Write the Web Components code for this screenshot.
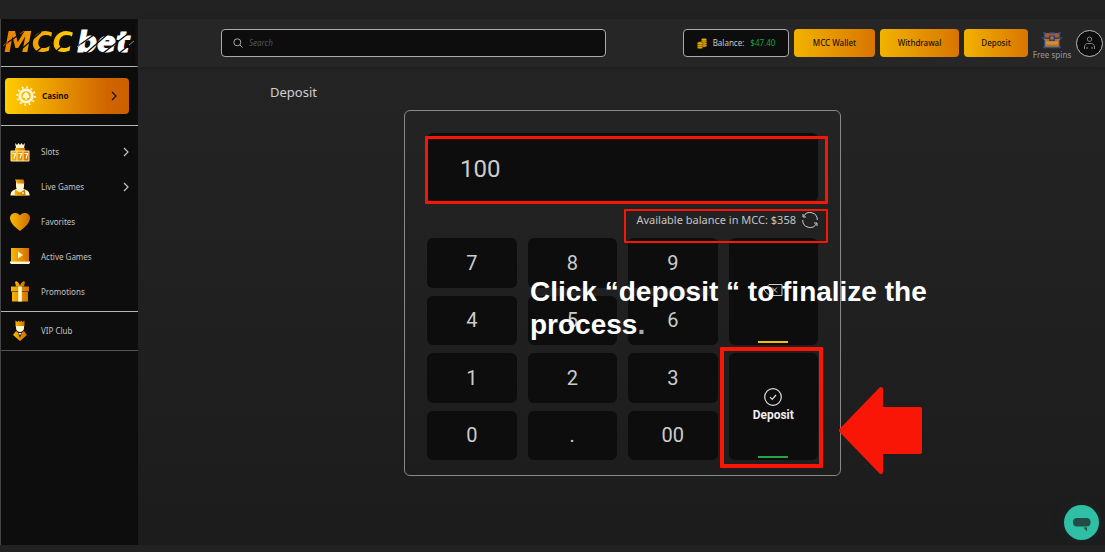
<!DOCTYPE html>
<html lang="en">
<head>
<meta charset="utf-8">
<meta name="viewport" content="width=device-width, initial-scale=1">
<title>MCC bet – Deposit</title>
<style>
  html, body { margin: 0; }
  body { font-family: "Noto Sans", Roboto, sans-serif; background: #222; color: #ccc; }
</style>
</head>
<body>
<casino-app></casino-app>

<script>
const define = (name, html, setup) => {
  const template = document.createElement('template');
  template.innerHTML = html;
  customElements.define(name, class extends HTMLElement {
    constructor() {
      super();
      const root = this.attachShadow({ mode: 'open' });
      root.append(template.content.cloneNode(true));
    }
    connectedCallback() { if (setup) setup(this, this.shadowRoot); }
  });
};

const gold = id => `<defs><linearGradient id="${id}"><stop offset="0" stop-color="#f8b900"/><stop offset="1" stop-color="#d06c00"/></linearGradient></defs>`;

const icons = {
  casino: `<svg viewBox="0 0 20 20"><circle cx="10" cy="10" r="6.2" fill="none" stroke="#fff6d0" stroke-width="2.8"/><circle cx="10" cy="10" r="8.8" fill="none" stroke="#fff6d0" stroke-width="2" stroke-dasharray="1.8 2.8"/><path d="M10 5.8c1 1.6 3.4 2.6 3.4 4.6 0 1.6-1.8 2.2-2.8 1.1l.7 2.3H8.7l.7-2.3c-1 1.1-2.8.5-2.8-1.1 0-2 2.4-3 3.4-4.6z" fill="#fff6d0"/></svg>`,
  slots: `<svg viewBox="0 0 20 20">${gold('g')}<path d="M5 1l2 2 1.5-2L10 3l1.500-2L13 3l2-2-1 5H6z" fill="#fff6d0"/><path d="M5 6h10v3H5z" fill="url(#g)"/><rect x=".5" y="8.500" width="19" height="11" rx="1" fill="#ffe9a8"/><path d="M1.500 9.500h5v9h-5zM7.500 9.500h5v9h-5zM13.500 9.500h5v9h-5z" fill="url(#g)"/><path d="M2.500 11.500h3L4 16.500M8.500 11.500h3L10 16.500M14.500 11.500h3L16 16.500" fill="none" stroke="#fff6d0" stroke-width="1.200"/></svg>`,
  live: `<svg viewBox="0 0 20 20">${gold('g')}<path d="M.5 18.500c0-4 2-5.500 6-6.500h7c4 1 6 2.500 6 6.500z" fill="#fff6d0"/><path d="M5 12.500l5 3 5-3 .5 6h-11z" fill="url(#g)"/><path d="M6 4h8v5c0 3-2 6-4 6s-4-3-4-6z" fill="#fff6d0"/><path d="M5 2.500h8.500l1 4H7z" fill="url(#g)"/><circle cx="13" cy="16" r="1" fill="#fff6d0"/></svg>`,
  heart: `<svg viewBox="0 0 20 20">${gold('g')}<path d="M10 19C5 15 0 11 0 6c0-5 7-7 10-2.500C13 -1 20 1 20 6c0 5-5 9-10 13z" fill="url(#g)"/></svg>`,
  active: `<svg viewBox="0 0 20 20">${gold('g')}<path d="M1 1h18v14H1z" fill="url(#g)"/><path d="M8 4.500l5 3.500L8 11.500z" fill="#fff6d0"/><path d="M0 14.500h20v1.200L19 17H1L0 15.700z" fill="#fff6d0"/></svg>`,
  gift: `<svg viewBox="0 0 20 20">${gold('g')}<path d="M1 4.500h18v5H1zM2 10h16v9.500H2z" fill="url(#g)"/><path d="M5 0c2-2 4 1 5 4C11 1 13-2 15 0l-1 4.500H6z" fill="url(#g)"/><path d="M8.200 4.500h3.600v15H8.200z" fill="#fff6d0"/></svg>`,
  vip: `<svg viewBox="0 0 20 20">${gold('g')}<path d="M5.500-.5l2 1.500L8.800-.5 10 1 11.200-.5l1.300 1.500 2-1.500v6h-9z" fill="url(#g)"/><path d="M6 5h8v2c0 2.500-2 4-4 4s-4-1.500-4-4z" fill="#fff6d0"/><path d="M6 10l4 3 4-3 3 4-7 6-7-6z" fill="url(#g)"/><path d="M8 12h4l-2 5z" fill="#222"/><path d="M8.500 12h3l-.7 1.500H9.200z" fill="#fff6d0"/></svg>`,
};

define('nav-item', `
<style>
  :host { display: block; }
  a { display: flex; align-items: center; box-sizing: border-box; height: 35px; padding: 0 8px 0 9px;
      color: #c4c4c4; font-size: 8px; line-height: 12px; text-decoration: none; }
  .icon { width: 20px; height: 20px; margin-right: 11px; flex: none; }
  .icon svg { display: block; width: 100%; height: 100%; overflow: visible; }
  .label { flex: 1; }
  .chevron { display: none; width: 8px; height: 10px; }
  :host([expandable]) .chevron { display: block; }
  :host([primary]) a { height: 36px; margin: 0 9px 0 4px; padding: 0 11px; border-radius: 4px;
      background: linear-gradient(90deg, #fc0 0%, #d06400 82%, #cc6000 100%); color: #171000; font-weight: 700; }
  :host([primary]) .icon { margin-right: 6px; }
</style>
<a href="#"><span class="icon"></span><span class="label"><slot></slot></span>
<svg class="chevron" viewBox="0 0 8 10"><path d="M2 1l4 4-4 4" fill="none" stroke="currentColor" stroke-width="1.200"/></svg></a>
`, (host, root) => { root.querySelector('.icon').innerHTML = icons[host.getAttribute('icon')]; });

define('brand-logo', `
<style>
  :host { display: block; }
  a { position: relative; display: flex; align-items: center; gap: 4px; height: 47px; padding-left: 3px;
      font: italic 700 28px/32px "DejaVu Sans", sans-serif; text-decoration: none; color: #fff; }
  .mcc { background: linear-gradient(90deg, #e67c00, #ffd000); -webkit-background-clip: text; background-clip: text; color: transparent; }
  .bet { -webkit-text-stroke: 1px #fff; }
  svg { position: absolute; left: 0; top: 0; width: 137px; height: 47px; }
</style>
<a href="#"><span class="mcc">MCC</span><span class="bet">bet</span>
<svg viewBox="0 0 137 47" fill="none"><path d="M3 26l19-13M16 34l24-21M34 34l24-21M53 34l24-21M77 27l20-14M84 35l24-21M101 35l27-21M117 35l17-13" stroke="#0d0d0d" stroke-width="1.300"/><path d="M2 27l5-4M19 15l4-3" stroke="#c87400" stroke-width=".8"/><path d="M76 28l4-3M128 26l5-4" stroke="#aaa" stroke-width=".8"/></svg></a>
`);

define('side-bar', `
<style>
  :host { display: block; box-sizing: border-box; background: #0d0d0d; border-left: 1px solid #444; }
  header { border-bottom: 1px solid #b5b5b5; }
  .top { padding: 11px 0; border-bottom: 1px solid #b5b5b5; }
  .games { padding: 8px 0 2px; border-bottom: 1px solid #b5b5b5; }
  .vip { padding: 1px 0 2px; border-bottom: 1px solid #555; }
</style>
<header><brand-logo></brand-logo></header>
<nav>
  <div class="top"><nav-item primary expandable icon="casino">Casino</nav-item></div>
  <div class="games">
    <nav-item expandable icon="slots">Slots</nav-item>
    <nav-item expandable icon="live">Live Games</nav-item>
    <nav-item icon="heart">Favorites</nav-item>
    <nav-item icon="active">Active Games</nav-item>
    <nav-item icon="gift">Promotions</nav-item>
  </div>
  <div class="vip"><nav-item icon="vip">VIP Club</nav-item></div>
</nav>
`);

define('gold-button', `
<style>
  :host { display: block; }
  button { height: 28px; width: 100%; padding: 0; border: 0; border-radius: 4px; cursor: pointer;
    background: linear-gradient(90deg, #f2b200, #d87500); color: #1c1300; font: 500 8px/12px "Noto Sans", sans-serif; }
</style>
<button type="button"><slot></slot></button>
`);

define('top-bar', `
<style>
  :host { display: flex; align-items: center; box-sizing: border-box; height: 48px; padding: 0 2px 0 83px;
    background: #262626; box-shadow: 0 1px 4px #1b1b1b; position: relative; }
  .search { display: flex; align-items: center; gap: 6px; box-sizing: border-box; flex: 0 1 385px; height: 28px; padding: 0 11px;
    border: 1px solid #aaa; border-radius: 4px; background: #0d0d0d; }
  .search svg { width: 10px; height: 10px; flex: none; }
  input { flex: 1; min-width: 0; padding: 0; border: 0; outline: 0; background: none; color: #ccc; font: italic 8px/12px "Noto Sans", sans-serif; }
  input::placeholder { color: #555; opacity: 1; }
  .actions { display: flex; align-items: center; gap: 5px; margin-left: auto; }
  .balance { display: flex; align-items: center; justify-content: center; box-sizing: border-box; width: 106px; height: 28px;
    border: 1px solid #aaa; border-radius: 4px; background: #0d0d0d; font-size: 8px; line-height: 12px; gap: 6px; white-space: nowrap; }
  .balance svg { width: 10px; height: 11px; }
  .balance b { font-weight: 400; color: #17a348; }
  .wallet { width: 81px; } .withdraw { width: 79px; } .deposit { width: 64px; }
  .spins { display: flex; flex-direction: column; align-items: center; width: 38px; padding-top: 6px; color: #8c8c8c;
     font-size: 8px; line-height: 12px; font-weight: 500; text-decoration: none; white-space: nowrap; }
  .spins svg { width: 20px; height: 17px; }
  .profile { width: 27px; height: 27px; padding: 0; border: 1px solid #bbb; border-radius: 50%; background: #0d0d0d; display: grid; place-items: center; }
  .profile svg { width: 13px; height: 14px; }
</style>
<label class="search">
  <svg viewBox="0 0 10 10" fill="none" stroke="#aaa"><circle cx="4.300" cy="4.300" r="3.500"/><path d="M7 7l2.500 2.500"/></svg>
  <input type="search" placeholder="Search" aria-label="Search">
</label>
<div class="actions">
  <div class="balance">
    <svg viewBox="0 0 10 11" fill="#e8ac0a" stroke="#5a3c00" stroke-width=".5"><ellipse cx="7" cy="7.500" rx="2.800" ry="1.500"/><ellipse cx="7" cy="5.500" rx="2.800" ry="1.500"/><ellipse cx="7" cy="3.500" rx="2.800" ry="1.500"/><ellipse cx="7" cy="1.700" rx="2.800" ry="1.500"/><ellipse cx="3" cy="9.300" rx="2.800" ry="1.500"/><ellipse cx="3" cy="7.300" rx="2.800" ry="1.500"/><ellipse cx="3" cy="5.300" rx="2.800" ry="1.500"/></svg>
    <span>Balance:</span><b>$47.40</b>
  </div>
  <gold-button class="wallet">MCC Wallet</gold-button>
  <gold-button class="withdraw">Withdrawal</gold-button>
  <gold-button class="deposit">Deposit</gold-button>
  <a class="spins" href="#">
    <svg viewBox="0 0 20 17"><path d="M2 1h16v5H2z" fill="#a85a28"/><path d="M2 7h16v8H2z" fill="#b87420"/><path d="M4 9.500h12v3H4z" fill="#d08f38"/><path d="M1 1h3M7 1h6M16 1h3M0 6h20M1 15.500h18" stroke="#2c4f8c" stroke-width="1.500"/><path d="M2.500 1v4M17.500 1v4M2.500 8v7M17.500 8v7" stroke="#2c4f8c" stroke-width="1.200"/><path d="M7 3.500h6V9H7z" fill="#27427a"/><path d="M8.500 4.500h3v3h-3z" fill="#d0604c"/></svg>
    <span>Free spins</span>
  </a>
  <button class="profile" type="button" aria-label="Profile"><svg viewBox="0 0 13 14" fill="none" stroke="#888"><circle cx="6.500" cy="3.200" r="2.200"/><path d="M1.500 13v-2c0-2 1.500-3.500 3-3.500h4c1.500 0 3 1.500 3 3.500v2M4 11v2M9 11v2"/></svg></button>
</div>
`);

define('pad-key', `
<style>
  :host { display: block; }
  :host([tall]) { grid-column: 4; grid-row: span 2; }
  button { position: relative; display: flex; flex-direction: column; align-items: center; justify-content: center; gap: 2px;
    width: 100%; height: 100%; padding: 0; border: 0; border-radius: 6px; background: #0d0d0d; color: #ccc;
    font: 400 20px/24px Roboto, sans-serif; cursor: pointer; }
  :host([tall]) button { padding-bottom: 4px; font: 700 12px/14px Roboto, sans-serif; color: #eee; }
  :host([accent]) button::after { content: ""; position: absolute; left: 50%; bottom: 2px; width: 30px; height: 2px; margin-left: -15px; background: var(--accent); }
</style>
<button type="button"><slot></slot></button>
`);

define('tutorial-note', `
<style>
  :host { position: absolute; left: 125px; top: 164px; width: 410px; z-index: 2; pointer-events: none; }
  p { margin: 0; font: 700 28px/33px "Liberation Sans", Arial, sans-serif; color: #fff; }
  span { color: #aaa; }
</style>
<p>Click “deposit “ to finalize the process<span>.</span></p>
`);

define('deposit-panel', `
<style>
  :host { position: relative; display: block; box-sizing: border-box; width: 100%; max-width: 437px; margin: 0 auto;
    padding: 22px 22px 15px; border: 1px solid #888; border-radius: 6px; }
  .amount { display: block; box-sizing: border-box; width: 100%; height: 69px; padding: 2px 33px 0; border: 0; border-radius: 6px; outline: 0;
    background: #0d0d0d; color: #ccc; font: 400 24px/30px Roboto, sans-serif; }
  .available { display: flex; align-items: center; justify-content: flex-end; gap: 6px; height: 36px; font-size: 11px; line-height: 16px; color: #c4c4c4; }
  .refresh { width: 16px; height: 16px; padding: 0; border: 0; background: none; }
  .refresh svg { display: block; width: 16px; height: 16px; }
  .keys { display: grid; grid-template-columns: repeat(4, 1fr); grid-template-rows: repeat(4, 1fr); grid-auto-flow: row dense; gap: 8px 11px; height: 222px; }
  .back { width: 20px; height: 14px; } .check { width: 18px; height: 18px; }
  .mark { position: absolute; box-sizing: border-box; border: 3px solid #f91607; border-radius: 1px; pointer-events: none; }
  .mark.one { left: 20px; top: 25px; width: 403px; height: 68px; }
  .mark.two { left: 219px; top: 98px; width: 204px; height: 34px; border-width: 2px; }
  .mark.three { left: 315px; top: 236px; width: 103px; height: 121px; border-width: 4px; }
  .arrow { position: absolute; left: 434px; top: 275px; width: 83px; height: 89px; }
</style>
<input class="amount" type="text" inputmode="decimal" value="100" aria-label="Deposit amount">
<div class="available"><span>Available balance in MCC: $358</span>
  <button class="refresh" type="button" aria-label="Refresh balance"><svg viewBox="0 0 16 16" fill="none" stroke="#ccc"><path d="M1.500 4.500A7.300 7.300 0 0 1 15.300 8M14.500 11.500A7.300 7.300 0 0 1 .7 8"/><path d="M1 2v3h3M15 14v-3h-3"/></svg></button>
</div>
<div class="keys">
  <pad-key>7</pad-key><pad-key>8</pad-key><pad-key>9</pad-key>
  <pad-key tall accent style="--accent: #f0be0c"><svg class="back" viewBox="0 0 20 14" role="img" aria-label="Delete" fill="none" stroke="#ccc"><path d="M6 1.500h13v11H6L1 7zM9 4.500l5 5M14 4.500l-5 5"/></svg></pad-key>
  <pad-key>4</pad-key><pad-key>5</pad-key><pad-key>6</pad-key>
  <pad-key>1</pad-key><pad-key>2</pad-key><pad-key>3</pad-key>
  <pad-key tall accent style="--accent: #22a447"><svg class="check" viewBox="0 0 18 18" fill="none" stroke="#ddd"><circle cx="9" cy="9" r="8.300" stroke-width="1.200"/><path d="M6 9.200l2.200 2.200L12 7" stroke-width="1.200"/></svg><span>Deposit</span></pad-key>
  <pad-key>0</pad-key><pad-key>.</pad-key><pad-key>00</pad-key>
</div>
<div class="mark one"></div><div class="mark two"></div><div class="mark three"></div>
<svg class="arrow" viewBox="0 0 83 89" fill="#f91607" stroke="#f91607" stroke-width="4" stroke-linejoin="round"><path d="M2 44.500L42 3v20h39v43H42v20z"/></svg>
<tutorial-note></tutorial-note>
`);

define('chat-button', `
<style>
  :host { position: fixed; right: 6px; bottom: 12px; z-index: 3; }
  button { display: block; width: 35px; height: 35px; padding: 0; border: 0; border-radius: 50%; background: #2fbfa4; box-shadow: 0 0 8px #1b2b28; }
  svg { display: block; width: 35px; height: 35px; }
</style>
<button type="button" aria-label="Open chat"><svg viewBox="0 0 35 35" fill="#214d45"><rect x="9" y="13" width="17.500" height="8.500" rx="4"/><path d="M19.500 22.500h3.500v4z"/></svg></button>
`);

define('casino-app', `
<style>
  :host { display: grid; grid-template-columns: 138px minmax(0, 1fr); box-sizing: border-box; min-height: 100vh; padding: 19px 0 7px; background: #222; }
  .page { display: flex; flex-direction: column; background: linear-gradient(#252525, #1c1c1c); }
  main { padding: 17px 0 24px 2px; }
  h1 { margin: 0 0 10px 130px; font-size: 13px; line-height: 16px; font-weight: 400; color: #d0d0d0; }
</style>
<side-bar></side-bar>
<div class="page">
  <top-bar></top-bar>
  <main>
    <h1>Deposit</h1>
    <deposit-panel></deposit-panel>
  </main>
</div>
<chat-button></chat-button>
`);
</script>
</body>
</html>
